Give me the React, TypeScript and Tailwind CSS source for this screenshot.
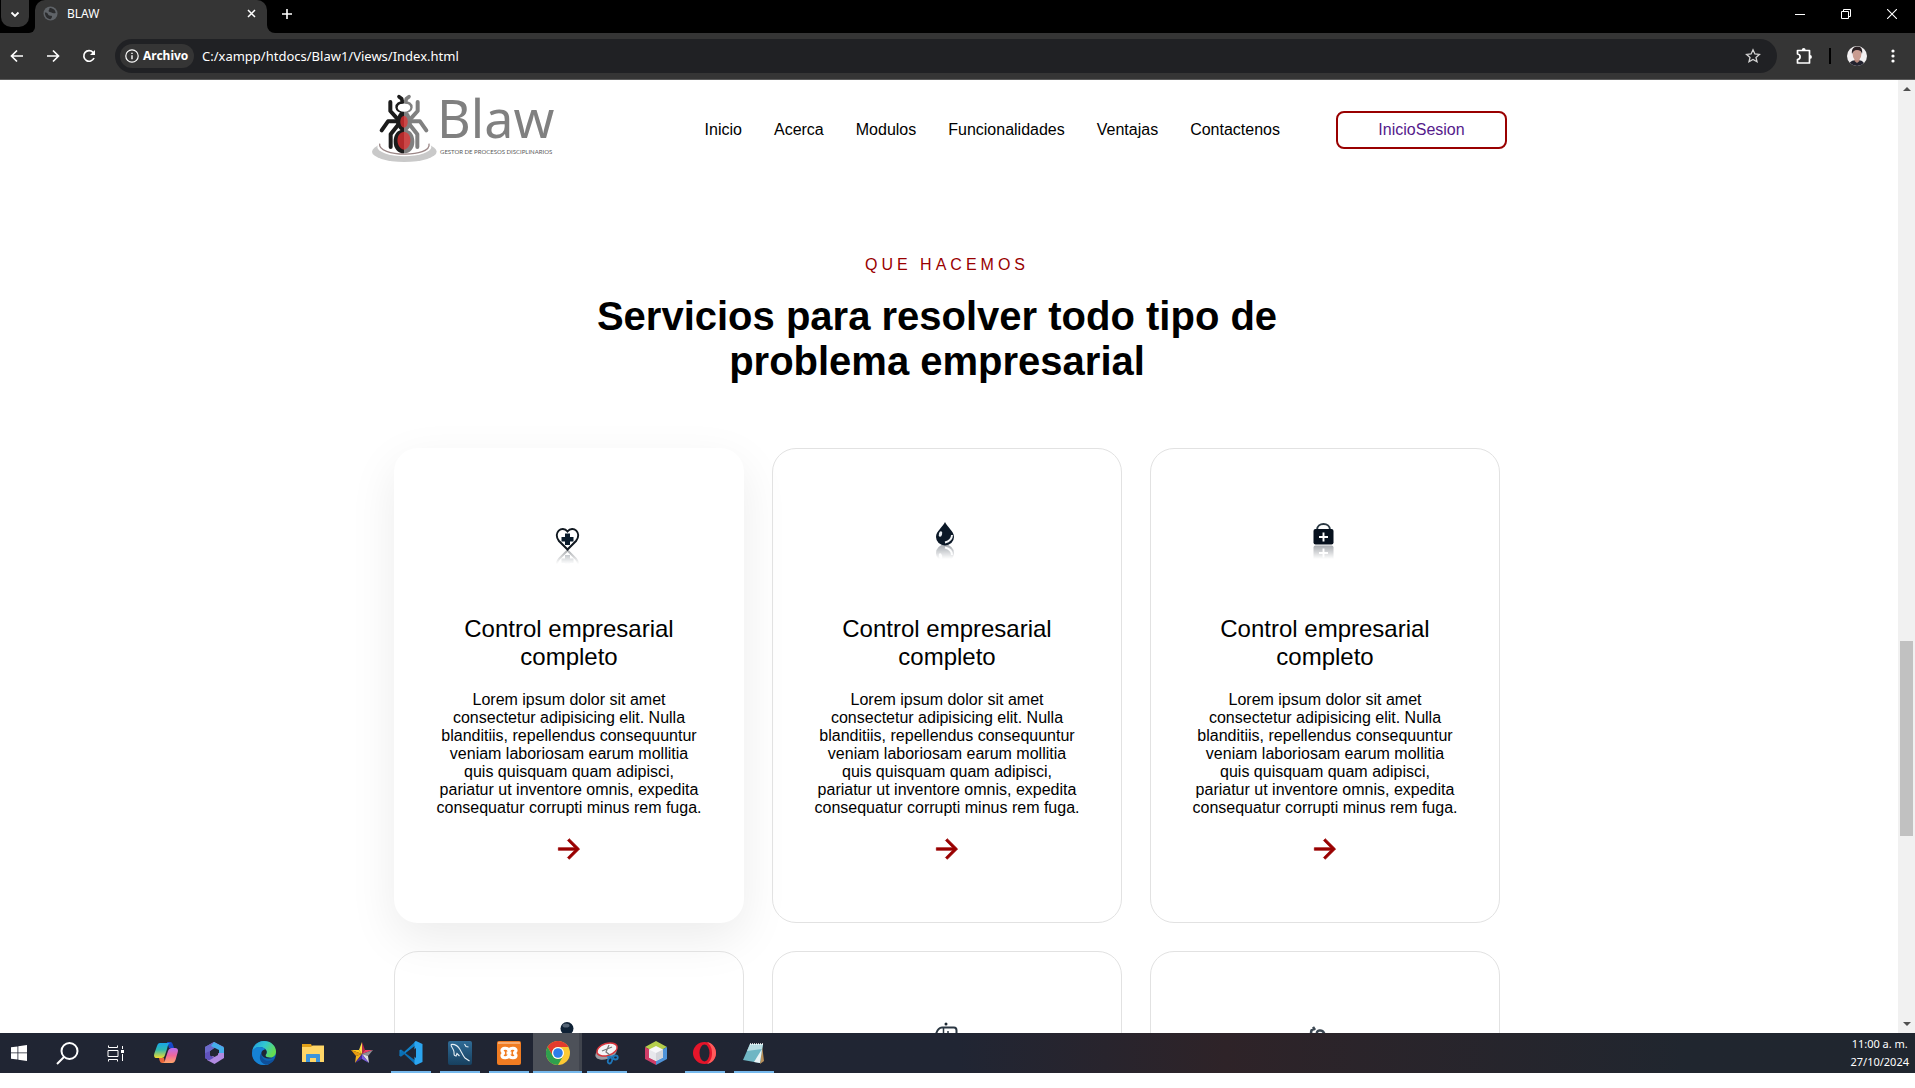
import React from "react";
import { RiArrowRightLine } from "react-icons/ri";

const LOREM =
  "Lorem ipsum dolor sit amet consectetur adipisicing elit. Nulla blanditiis, repellendus consequuntur veniam laboriosam earum mollitia quis quisquam quam adipisci, pariatur ut inventore omnis, expedita consequatur corrupti minus rem fuga.";

/* ---------- Browser chrome ---------- */

function TabStrip() {
  return (
    <div className="flex h-[33px] shrink-0 items-start bg-black text-white">
      <button aria-label="Buscar pestañas" className="ml-px flex h-[27px] w-7 items-center justify-center rounded-b-[10px] bg-[#353535]">
        <svg width="10" height="10" viewBox="0 0 10 10" fill="none" stroke="white" strokeWidth="1.8">
          <path d="M1.5 3.5 5 7l3.500-3.500" />
        </svg>
      </button>
      <div className="flex h-full w-1.5 items-end bg-[#353535]">
        <span className="block h-full w-full rounded-br-lg bg-black" />
      </div>
      <div className="flex h-full w-[232px] items-start rounded-t-[10px] bg-[#353535]">
        <div className="flex h-[27px] w-full items-center pr-2 pl-2">
          <svg width="15" height="15" viewBox="0 0 16 16">
            <circle cx="8" cy="8" r="7.500" fill="#5f6368" />
            <path d="M2 7c2 0 3 .5 3.500 2s2 1 3.500 1.500 0 3-1 3.500C4.500 14 2 11 2 7zM7 2c0 2-1.500 2.500-1 3.500s2 .5 3 1.500 3 1 4.500.5C13.500 4.500 11 2 7 2z" fill="#2b2c2e" />
          </svg>
          <span className="ml-[9px] flex-1 text-[12px]">BLAW</span>
          <button aria-label="Cerrar pestaña" className="flex h-4 w-4 items-center justify-center">
            <svg width="9" height="9" viewBox="0 0 9 9" stroke="white" strokeWidth="1.500">
              <path d="M1 1l7 7M8 1 1 8" />
            </svg>
          </button>
        </div>
      </div>
      <div className="flex h-full w-2 items-end bg-[#353535]">
        <span className="block h-full w-full rounded-bl-lg bg-black" />
      </div>
      <button aria-label="Nueva pestaña" className="ml-1 flex h-[27px] w-4 items-center justify-center">
        <svg width="12" height="12" viewBox="0 0 12 12" stroke="white" strokeWidth="1.600">
          <path d="M6 1v10M1 6h10" />
        </svg>
      </button>
      <div className="ml-auto flex h-[27px]">
        <button aria-label="Minimizar" className="flex w-[46px] items-center justify-center">
          <svg width="10" height="10" viewBox="0 0 10 10" stroke="white">
            <path d="M0 5.500h10" />
          </svg>
        </button>
        <button aria-label="Restaurar" className="flex w-[46px] items-center justify-center">
          <svg width="10" height="10" viewBox="0 0 10 10" fill="none" stroke="white">
            <path d="M.5 2.500h7v7h-7zM2.500 2.500v-2h7v7h-2" />
          </svg>
        </button>
        <button aria-label="Cerrar" className="flex w-[46px] items-center justify-center">
          <svg width="10" height="10" viewBox="0 0 10 10" stroke="white" strokeWidth="1.100">
            <path d="M0 0l10 10M10 0 0 10" />
          </svg>
        </button>
      </div>
    </div>
  );
}

function Toolbar() {
  return (
    <div className="flex h-[47px] shrink-0 items-center border-b border-[#5c5c5c] bg-[#353535] text-white">
      <div className="flex w-[115px] items-center gap-5 pl-[9px]">
        <button aria-label="Atrás">
          <svg width="16" height="16" viewBox="0 0 16 16" fill="none" stroke="white" strokeWidth="1.700">
            <path d="M14 8H3M8 2.500 2.500 8 8 13.500" />
          </svg>
        </button>
        <button aria-label="Adelante">
          <svg width="16" height="16" viewBox="0 0 16 16" fill="none" stroke="white" strokeWidth="1.700">
            <path d="M2 8h11M8 2.500 13.500 8 8 13.500" />
          </svg>
        </button>
        <button aria-label="Recargar">
          <svg width="16" height="16" viewBox="0 0 16 16" fill="none" stroke="white" strokeWidth="1.700">
            <path d="M13 10a5.300 5.300 0 1 1-1-5.700L13.500 6" />
            <path d="M14 2v5H9z" fill="white" stroke="none" />
          </svg>
        </button>
      </div>
      <div className="flex h-[34px] flex-1 items-center rounded-full bg-[#202124] px-[5px]">
        <button className="flex h-6 w-[74px] items-center gap-1 rounded-full bg-[#353535] pl-[5px] text-[12px] font-bold">
          <svg width="14" height="14" viewBox="0 0 14 14" fill="none" stroke="white">
            <circle cx="7" cy="7" r="6.200" strokeWidth="1.200" />
            <path d="M7 6.200v4M7 3.700v1.300" strokeWidth="1.400" />
          </svg>
          Archivo
        </button>
        <input
          aria-label="Dirección"
          defaultValue="C:/xampp/htdocs/Blaw1/Views/Index.html"
          className="ml-2 flex-1 bg-transparent pt-px text-[13px] outline-none"
        />
        <button aria-label="Marcador" className="mr-[11px]">
          <svg width="16" height="16" viewBox="0 0 16 16" fill="none" stroke="#d5d5d5" strokeWidth="1.300">
            <path d="m8 1.800 1.900 4.100 4.500.5-3.400 3 1 4.400L8 11.500l-4 2.300 1-4.400-3.400-3 4.500-.5z" />
          </svg>
        </button>
      </div>
      <div className="flex w-[138px] items-center">
        <button aria-label="Extensiones" className="ml-[19px]">
          <svg width="17" height="18" viewBox="0 0 17 18" fill="none" stroke="white" strokeWidth="1.700">
            <path d="M1.500 3.500h12v12.500h-12v-3.500c3.500-.5 3.500-5 0-5.500z" strokeLinejoin="round" />
            <path d="M5.800 3a1.900 1.900 0 0 1 3.800 0zM14 8a1.900 1.900 0 0 1 0 3.800z" fill="white" stroke="none" />
          </svg>
        </button>
        <span className="ml-4 h-4 w-0.5 bg-black" />
        <button aria-label="Perfil" className="ml-4">
          <svg width="20" height="20" viewBox="0 0 20 20">
            <clipPath id="avatar"><circle cx="10" cy="10" r="10" /></clipPath>
            <g clipPath="url(#avatar)">
              <rect width="20" height="20" fill="#f3f1f2" />
              <path d="M2 20c0-4 3-6 8-6s7 2 8 6z" fill="#23232f" />
              <path d="M7.500 12h5v3l-2.500 2-2.500-2z" fill="#b9897c" />
              <ellipse cx="10" cy="8.500" rx="4.300" ry="5.800" fill="#c99c90" />
              <path d="M5 8C4 2 8 0 11 .5c3 0 5 3 4 7.500-1-3-2-4-5-4S6 6 5 8z" fill="#2a2023" />
            </g>
          </svg>
        </button>
        <button aria-label="Menú" className="ml-6">
          <svg width="4" height="14" viewBox="0 0 4 14" fill="white">
            <circle cx="2" cy="2" r="1.600" /><circle cx="2" cy="7" r="1.600" /><circle cx="2" cy="12" r="1.600" />
          </svg>
        </button>
      </div>
    </div>
  );
}

function Scrollbar() {
  return (
    <div className="flex w-[17px] shrink-0 flex-col items-center bg-[#f1f1f1]">
      <svg className="my-[5px]" width="8" height="8" viewBox="0 0 8 8" fill="#505050"><path d="M4 2 8 6H0z" /></svg>
      <div className="min-h-0 flex-[543]" />
      <div className="min-h-0 w-[13px] flex-[195] bg-[#c1c1c1]" />
      <div className="min-h-0 flex-[179]" />
      <svg className="my-[5px]" width="8" height="8" viewBox="0 0 8 8" fill="#505050"><path d="M4 6 0 2h8z" /></svg>
    </div>
  );
}

/* ---------- Site ---------- */

function AntHalf() {
  return (
    <>
      <g fill="none" stroke="currentColor" strokeWidth="12" strokeLinecap="round" strokeLinejoin="round">
        <path d="M116 51l8 6 2 9" strokeWidth="11" />
        <path d="M131 68c-14-1-23 6-22 15s8 13 22 15" strokeWidth="8" strokeLinecap="butt" />
        <path d="M90 67v27l20 22" />
        <path d="M64 152l19-27h30" />
        <path d="M91 202v-38l22-28" />
      </g>
      <path d="M131 94c-10 2-18 8-19 20-7 4-7 18 1 28 3 5 6 9 8 9-14 4-21 18-21 35 0 20 12 35 31 35z" fill="currentColor" />
    </>
  );
}

function Logo() {
  return (
    <a href="#inicio" aria-label="Blaw" className="flex h-[70px] items-start text-[#808080]">
      <svg width="65" height="70" viewBox="35 40 195 210">
        <ellipse cx="132" cy="216" rx="97" ry="31" fill="#c9c9c9" />
        <ellipse cx="132" cy="202" rx="81" ry="28" fill="#fff" />
        <path d="M58 192c-8 40 157 44 148 0" fill="none" stroke="#9b8787" strokeWidth="4" />
        <g className="text-[#1b1b1b]"><AntHalf /></g>
        <g className="text-[#808080]" transform="translate(262 0) scale(-1 1)"><AntHalf /></g>
        <ellipse cx="131" cy="84" rx="19" ry="12" fill="#fff" />
        <path d="M131 108c-15 2-15 34 0 36zM131 156c-27 4-25 48 0 54z" fill="#b52a2b" />
        <path d="M131 108c15 2 15 34 0 36zM131 156c27 4 25 48 0 54z" fill="#cb4747" />
      </svg>
      <span className="flex flex-col font-['Noto_Sans','Open_Sans',sans-serif]">
        <span className="h-[55px] text-[52px] leading-[50px]">Blaw</span>
        <span className="ml-[3px] font-['Lato',sans-serif] text-[6px] leading-[8px] whitespace-nowrap text-[#5c5c5c]">GESTOR DE PROCESOS DISCIPLINARIOS</span>
      </span>
    </a>
  );
}

const NAV = ["Inicio", "Acerca", "Modulos", "Funcionalidades", "Ventajas", "Contactenos"];

function SiteHeader() {
  return (
    <header className="mx-auto flex w-full max-w-[1154px] items-center justify-between pt-[13px] pr-[19px]">
      <Logo />
      <div className="mt-1 flex items-center gap-14">
        <nav className="flex gap-8">
          {NAV.map((n) => (
            <a key={n} href={"#" + n.toLowerCase()}>{n}</a>
          ))}
        </nav>
        <a href="#sesion" className="flex h-[38px] w-[171px] items-center justify-center rounded-lg border-2 border-[#990000] text-[#551a8b]">
          InicioSesion
        </a>
      </div>
    </header>
  );
}

const HeartArt = () => (
  <>
    <path d="M28.500 39.500 20 31c-6.500-8 3-16.500 8.500-9.500 5.500-7 15 1.500 8.500 9.500z" fill="#fff" stroke="#101820" strokeWidth="2" />
    <path d="M26 23.500h5V27h3.500v4.500H31V35h-5v-3.500h-3.500V27H26z" fill="#0b1c2c" />
  </>
);
const DropArt = () => (
  <>
    <path d="M28 12c2 5 9 9 9 15a9 8.500 0 0 1-18 0c0-6 7-10 9-15z" fill="#0b1827" />
    <ellipse cx="23.500" cy="24" rx="1.600" ry="2.800" fill="#e8edf2" transform="rotate(15 23.500 24)" />
    <path d="M35 25c0 4-3 6.500-7 7.500" fill="none" stroke="#f2f4f6" strokeWidth="2" />
  </>
);
const LockArt = () => (
  <>
    <path d="M22 20c0-8 13-8 13 0" fill="none" stroke="#2b3943" strokeWidth="2" />
    <rect x="18.500" y="19" width="20" height="15.500" rx="2" fill="#07111e" />
    <path d="M28.500 22.500v9M24 27h9" stroke="#fff" strokeWidth="1.900" />
  </>
);
const PersonArt = () => (
  <>
    <ellipse cx="28" cy="15.500" rx="6.500" ry="6.500" fill="#0f2135" />
    <ellipse cx="27" cy="12.500" rx="3.500" ry="2" fill="#536273" />
    <path d="M20 40v-9c0-10 16-10 16 0v9z" fill="#0f2135" />
  </>
);
const AmbulanceArt = () => (
  <>
    <circle cx="29" cy="11" r="1.500" fill="#1b2732" />
    <path d="M18 26c1-7 3-11.500 7-11.500h12c2 0 2.500 1 2.500 3V34H18z" fill="#fff" stroke="#2b3742" strokeWidth="2" />
    <path d="M26.500 15v10H19M31 18v9M28 22h7" fill="none" stroke="#2b3742" strokeWidth="1.500" />
  </>
);
const StethoscopeArt = () => (
  <path d="M16 20c0-3 1-4 3-4M18 14l2 3M22 21c-1-4 5-5 7-1l3 12" fill="none" stroke="#3b4752" strokeWidth="2.500" />
);

const CARDS = [
  { Art: HeartArt, base: 40 },
  { Art: DropArt, base: 35 },
  { Art: LockArt, base: 35 },
  { Art: PersonArt, base: 40 },
  { Art: AmbulanceArt, base: 36 },
  { Art: StethoscopeArt, base: 36 },
];

function CardIcon({ Art, base, id }: { Art: React.FC; base: number; id: number }) {
  return (
    <svg width="60" height="60" viewBox="0 0 60 60" aria-hidden="true">
      <defs>
        <linearGradient id={"fade" + id} gradientUnits="userSpaceOnUse" x1="0" y1={base} x2="0" y2={base + 14}>
          <stop offset="0" stopColor="white" stopOpacity=".36" />
          <stop offset="1" stopColor="white" stopOpacity="0" />
        </linearGradient>
        <mask id={"mask" + id} maskUnits="userSpaceOnUse" x="0" y={base} width="60" height="14">
          <rect x="0" y={base} width="60" height="14" fill={"url(#fade" + id + ")"} />
        </mask>
      </defs>
      <g mask={"url(#mask" + id + ")"}>
        <g transform={"translate(0 " + base * 2 + ") scale(1 -1)"}><Art /></g>
      </g>
      <Art />
    </svg>
  );
}

function ServiceCard({ index }: { index: number }) {
  const { Art, base } = CARDS[index];
  const look = index === 0 ? "border-transparent shadow-[0_16px_48px_rgba(0,0,0,0.08)]" : "border-[#e2e2e2]";
  return (
    <article className={"flex flex-col items-center rounded-3xl border px-10 pt-[61px] pb-[57px] text-center " + look}>
      <CardIcon Art={Art} base={base} id={index} />
      <h3 className="mt-[45px] text-[24px] leading-[28px]">Control empresarial completo</h3>
      <p className="mt-5 leading-[18px]">{LOREM}</p>
      <a href="#servicio" aria-label="Ver servicio" className="mt-4 text-[#990000]">
        <RiArrowRightLine size={32} stroke="currentColor" strokeWidth={0.5} />
      </a>
    </article>
  );
}

function Site() {
  return (
    <div className="min-w-0 flex-1 overflow-hidden bg-white font-['Liberation_Sans',Arial,sans-serif] text-[16px] text-black">
      <SiteHeader />
      <main>
        <p className="mt-[91px] pr-1 text-center leading-[22px] tracking-[4px] text-[#990000]">QUE HACEMOS</p>
        <div className="mx-auto max-w-[740px] pr-6">
          <h2 className="mt-[18px] text-center text-[40px] leading-[45px] font-bold">
            Servicios para resolver todo tipo de problema empresarial
          </h2>
        </div>
        <div className="mx-auto mt-16 grid max-w-[1110px] grid-cols-3 gap-7 pr-1">
          {CARDS.map((_, i) => (
            <ServiceCard key={i} index={i} />
          ))}
        </div>
      </main>
    </div>
  );
}

/* ---------- Taskbar ---------- */

const Copilot = () => (
  <svg width="24" height="22" viewBox="0 0 24 22">
    <defs>
      <linearGradient id="cpA" x1="0" y1="0" x2="0" y2="1"><stop offset="0" stopColor="#18a5e8" /><stop offset=".45" stopColor="#2fb8b0" /><stop offset="1" stopColor="#f4dc2c" /></linearGradient>
      <linearGradient id="cpB" x1="0" y1="0" x2="0" y2="1"><stop offset="0" stopColor="#b56ef0" /><stop offset=".5" stopColor="#f0679b" /><stop offset="1" stopColor="#ffa668" /></linearGradient>
    </defs>
    <path d="M13 0h3.500c1.500 0 2 1.500 2.500 3l1 3h-5z" fill="#1748c8" />
    <path d="M6 1h11c-3 0-3 3-4 6l-2 6c-1 3-2 3-5 3H3c-3 0-3.500-2-2.500-5L3 4c.7-2 1.500-3 3-3z" fill="url(#cpA)" />
    <path d="M11 21H8c-2 0-2.500-3-3-5h5z" fill="#e9653a" />
    <path d="M18 6h3c3 0 3.500 2 2.500 5l-2 7c-.8 2-1.500 3-3.500 3H8c3 0 3-3 4-6l2-6c.8-2 2-3 4-3z" fill="url(#cpB)" />
  </svg>
);

const M365 = () => (
  <svg width="21" height="22" viewBox="0 0 21 22">
    <path d="M10 0 1 5v11l5 3V9l5-4 4 2 5-2z" fill="#8074d8" />
    <path d="M10 0 1 5v6l5-2 9-6z" fill="#6b69c9" />
    <path d="M10 0l10 5.500V14l-5-2V8l-8-4z" fill="#45aeea" />
    <path d="M20 11v5l-9.500 6L3 18l2-2 10-5z" fill="#b28be2" />
    <path d="M1 11v5l4 2.500 5-3-4-2V9z" fill="#5f52bc" />
    <path d="M10.500 7 14 9v4l-3.500 2L7 13V9z" fill="#222633" />
  </svg>
);

const Edge = () => (
  <svg width="24" height="24" viewBox="0 0 24 24">
    <defs>
      <linearGradient id="edA" x1="0" y1="0" x2="1" y2=".5"><stop offset="0" stopColor="#2596dc" /><stop offset=".5" stopColor="#31c8d2" /><stop offset="1" stopColor="#65dd50" /></linearGradient>
    </defs>
    <circle cx="12" cy="12" r="12" fill="#0d64b4" />
    <path d="M.3 10C1.500 3.500 6.500 0 12 0c7 0 12 5 12 10.500 0 4-3 6-6 6-2.500 0-4.500-.8-4.500-2s1.500-1.500 1.200-4C14.200 7.500 11 6 8 6 4.500 6 1.500 8 .3 10z" fill="url(#edA)" />
    <path d="M0 12c.5-4 4-6.500 8-6 3 .3 5 1.500 6 3-3-1-6 2-5 6s4 7 8 8c-2 .9-3.500 1-5 1C5 24 0 19 0 12z" fill="#1682d4" />
    <path d="M9.500 12c-1 5 4 9 9 7.500 2-.5 3-1 4.300-2-2 4-5.500 6-9 6.300-5-1.500-8-7-4.300-11.800z" fill="#0e4f9a" />
    <path d="M13.500 14.500c0-1.300 1.400-1.500 1.200-4-.2-1-.7-1.700-1.500-2.300C10 9 9 11.500 9.800 14c2 3.500 6.200 4.500 12.700 2.500-2 .7-9 .7-9-2z" fill="#202634" />
  </svg>
);

const Folder = () => (
  <svg width="22" height="18" viewBox="0 0 22 18">
    <path d="M0 0h9l1 2h11v4H0z" fill="#e1a018" />
    <path d="M0 3h9l1.500-1.500H22V18H0z" fill="#ffd667" />
    <path d="M4 18v-7c0-.6.400-1 1-1h12c.6 0 1 .4 1 1v7h-4v-4H8v4z" fill="#3b94dc" />
  </svg>
);

const Star = () => (
  <svg width="22" height="22" viewBox="0 0 22 22">
    <path d="M11 0v12L8 8z" fill="#ffe14a" /><path d="M11 0l3 8-3 4z" fill="#b02a48" />
    <path d="M0 8h8l3 4z" fill="#ffc61c" /><path d="M0 8l11 4-6 2z" fill="#e89a10" />
    <path d="M22 8h-8l-3 4z" fill="#ec3d63" /><path d="M22 8l-11 4 6 2z" fill="#8f8f95" />
    <path d="M18 21l-1-7-6-2z" fill="#dedede" /><path d="M18 21l-7-4v-5z" fill="#7a5de0" />
    <path d="M4 21l1-7 6-2z" fill="#f4b41e" /><path d="M4 21l7-4v-5z" fill="#4a2a9a" />
  </svg>
);

const VsCode = () => (
  <svg width="24" height="24" viewBox="0 0 24 24">
    <path d="M17 0 5 11 2 8.500.5 9.300v5.400l1.500.8L17 4z" fill="#1080c8" />
    <path d="M17 24 5 13l-3 2.500-1.500-.8 1.500-6L17 20z" fill="#0a6fb5" />
    <path d="M17 0l6.500 3v18L17 24l-1.500-1V1z" fill="#2ba5f0" />
    <path d="M17 7v10l-6.500-5z" fill="#202634" />
  </svg>
);

const MySql = () => (
  <svg width="24" height="24" viewBox="0 0 24 24">
    <defs><linearGradient id="my" x1="0" y1="0" x2="0" y2="1"><stop offset="0" stopColor="#2f6b96" /><stop offset="1" stopColor="#17405f" /></linearGradient></defs>
    <rect width="24" height="24" rx="2" fill="url(#my)" />
    <path d="M3 3.500c4-.5 7 1.500 9 5s3 6.500 5 8.500l4.500 3M3 3.500c0 3 3 4.500 3 7.500s0 3.500 2 4l1-2.500 2.500 2.500M16.500 3l1.500 2.500 2.500.5" fill="none" stroke="#e8f0f5" strokeWidth="1.100" />
  </svg>
);

const Xampp = () => (
  <svg width="24" height="24" viewBox="0 0 24 24">
    <rect width="24" height="24" rx="2" fill="#f07c22" />
    <path d="M1 1h22v2H1z" fill="#f6ab71" />
    <path d="M12 9.500c-1.500-3.500-7-2.500-7 0C5 11 6.500 11 6.500 12S5 13 5 14.500c0 2.500 5.500 3.500 7 0 1.500 3.500 7 2.500 7 0 0-1.500-1.500-1.500-1.500-2.500s1.500-1 1.500-2.500c0-2.500-5.500-3.500-7 0zM9.500 12h5" fill="none" stroke="#fff" strokeWidth="3.200" strokeLinejoin="round" />
  </svg>
);

const Chrome = () => (
  <svg width="24" height="24" viewBox="0 0 24 24">
    <circle cx="12" cy="12" r="12" fill="#fcc934" />
    <path d="M1.600 6A12 12 0 0 1 22.400 6H12a6 6 0 0 0-5.200 9z" fill="#e33b2e" />
    <path d="M1.600 6A12 12 0 0 0 12 24l5.200-9a6 6 0 0 1-10.400 0z" fill="#2fa04e" />
    <circle cx="12" cy="12" r="6" fill="#fff" />
    <circle cx="12" cy="12" r="4.800" fill="#2e7de9" />
  </svg>
);

const Snip = () => (
  <svg width="24" height="24" viewBox="0 0 24 24">
    <ellipse cx="11" cy="12" rx="11" ry="6" fill="#9a9ca3" transform="rotate(-18 11 12)" />
    <ellipse cx="12" cy="8.500" rx="10.500" ry="6" fill="#f4f4f6" stroke="#d8343b" strokeWidth="1.500" transform="rotate(-18 12 8.500)" />
    <path d="M7 10l10-4M14 4l-3 7 4 3" fill="none" stroke="#777" strokeWidth="1.200" />
    <path d="M12 16l7-1" stroke="#2b7fc0" strokeWidth="1.500" />
    <ellipse cx="15" cy="19.500" rx="2" ry="3" fill="none" stroke="#1f77bb" strokeWidth="1.800" transform="rotate(20 15 19.500)" />
    <ellipse cx="20.500" cy="16.500" rx="2.300" ry="2" fill="none" stroke="#1f77bb" strokeWidth="1.800" />
  </svg>
);

const NetBeans = () => (
  <svg width="22" height="24" viewBox="0 0 22 24">
    <path d="M11 0l11 6-11 6L0 6z" fill="#b5cf4c" />
    <path d="M0 6l11 6v12L0 18z" fill="#cf3d68" />
    <path d="M22 6l-11 6v12l11-6z" fill="#4f93d8" />
    <path d="M11 5l7 3.500v8L11 20l-7-3.500v-8z" fill="#f8f8fa" />
    <path d="M11 12l7-3.500v8L11 20z" fill="#d3d5da" /><path d="M11 12 4 8.500v8L11 20z" fill="#e7e8ec" />
  </svg>
);

const Opera = () => (
  <svg width="23" height="22" viewBox="0 0 23 22">
    <ellipse cx="11.500" cy="11" rx="11.500" ry="11" fill="#e5152a" />
    <path d="M14 0c5 1 9 5 9 11s-4 10-9 11c4-3 5-7 5-11s-1-8-5-11z" fill="#ff5b5b" />
    <ellipse cx="11.500" cy="11" rx="5" ry="8.500" fill="#222633" />
  </svg>
);

const Notepad = () => (
  <svg width="22" height="21" viewBox="0 0 22 21">
    <path d="M19 2l2 16-4 3z" fill="#b8905a" />
    <path d="M7 1h13l-3 19L0 17z" fill="#6fb6c4" />
    <path d="M7 1h13l-1 5L4 8z" fill="#b9dde3" />
    <path d="M19 6l-2 14-6-1z" fill="#e9f3f5" />
    <path d="M7 1h13" stroke="#fff" strokeWidth="1.500" strokeDasharray="1 1" />
  </svg>
);

const APPS: { name: string; Icon: React.FC; state?: "open" | "active" }[] = [
  { name: "Copilot", Icon: Copilot },
  { name: "Microsoft 365", Icon: M365 },
  { name: "Edge", Icon: Edge },
  { name: "Explorador", Icon: Folder },
  { name: "Estrella", Icon: Star },
  { name: "Visual Studio Code", Icon: VsCode, state: "open" },
  { name: "MySQL Workbench", Icon: MySql, state: "open" },
  { name: "XAMPP", Icon: Xampp, state: "open" },
  { name: "Chrome", Icon: Chrome, state: "active" },
  { name: "Recortes", Icon: Snip, state: "open" },
  { name: "NetBeans", Icon: NetBeans },
  { name: "Opera", Icon: Opera, state: "open" },
  { name: "Bloc de notas", Icon: Notepad, state: "open" },
];

function Taskbar() {
  return (
    <footer className="flex h-10 shrink-0 bg-linear-to-r from-[#202533] from-50% via-[#2e2328] via-64% to-[#20262f] to-88% text-white">
      <button aria-label="Inicio" className="flex w-[43px] items-center justify-center pr-[5px]">
        <svg width="16" height="16" viewBox="0 0 16 16" fill="white">
          <path d="M0 2.300 6.500 1.400v6.100H0zM7.300 1.200 16 0v7.500H7.300zM0 8.300h6.500v6.300L0 13.700zM7.300 8.300H16V16l-8.700-1.200z" />
        </svg>
      </button>
      <button aria-label="Buscar" className="flex w-12 items-center justify-center">
        <svg width="23" height="23" viewBox="0 0 23 23" fill="none" stroke="white" strokeWidth="2">
          <circle cx="13.500" cy="9" r="8" /><path d="M8 15l-7 7" />
        </svg>
      </button>
      <button aria-label="Vista de tareas" className="flex w-12 items-center justify-center">
        <svg width="17" height="17" viewBox="0 0 17 17" fill="none" stroke="white">
          <path d="M1.500.5v2h9v-2M1 5.500h10v6H1zM1.500 16.500v-2h9v2M15.500 1v3M15.500 9v7" />
          <path d="M14 5h3v3h-3z" fill="white" stroke="none" />
        </svg>
      </button>
      <div className="ml-0.5 flex">
        {APPS.map(({ name, Icon, state }) => (
          <button
            key={name}
            aria-label={name}
            className={"flex w-[49px] flex-col items-center " + (state === "active" ? "bg-[#4d5159] shadow-[inset_-3px_0_#40444d]" : "")}
          >
            <span className="flex flex-1 items-center">
              <Icon />
            </span>
            <span className={state === "active" ? "-mt-0.5 h-0.5 w-full bg-[#76b9ed]" : state === "open" ? "-mt-0.5 h-0.5 w-10 bg-[#76b9ed]" : "-mt-0.5 h-0.5 w-10"} />
          </button>
        ))}
      </div>
      <div className="mr-[6px] ml-auto flex flex-col items-center justify-center text-[11px] leading-[18px]">
        <time>11:00 a. m.</time>
        <time>27/10/2024</time>
      </div>
    </footer>
  );
}

export default function App() {
  return (
    <div className="flex h-screen flex-col overflow-hidden bg-white pb-[15px] font-['Noto_Sans','Open_Sans',sans-serif]">
      <TabStrip />
      <Toolbar />
      <div className="flex min-h-0 flex-1">
        <Site />
        <Scrollbar />
      </div>
      <Taskbar />
    </div>
  );
}
